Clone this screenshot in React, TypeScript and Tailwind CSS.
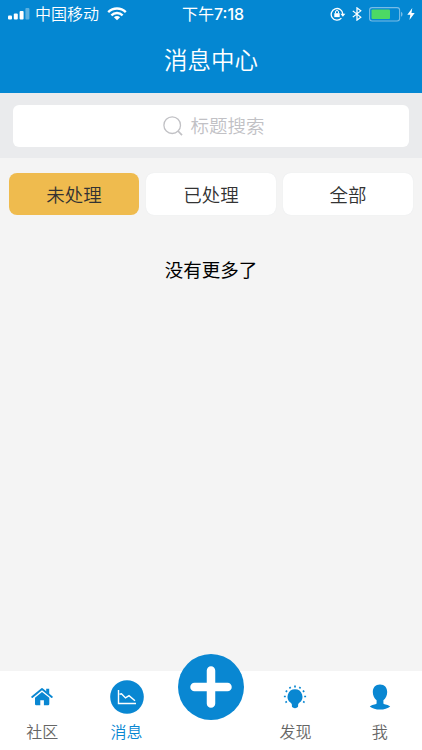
import type { ReactNode } from "react";

function StatusBar() {
  return (
    <div className="grid h-7 grid-cols-[1fr_auto_1fr] items-center pl-2 pr-[6px] text-[16px] leading-7 text-white">
      <div className="flex items-center">
        <svg width="22" height="12" viewBox="0 0 22 12" fill="currentColor">
          <rect x="0" y="7.5" width="4" height="4" rx="1" />
          <rect x="5.8" y="5.5" width="4" height="6" rx="1" />
          <rect x="11.6" y="3" width="4" height="8.5" rx="1" />
          <rect x="17.4" y="0" width="4" height="11.5" rx="1" opacity=".35" />
        </svg>
        <span className="ml-[5px] pt-[2px] leading-[26px] font-[350]">中国移动</span>
        <svg className="ml-2" width="20" height="14" viewBox="0 0 20 14" fill="none" stroke="currentColor" strokeWidth="2.4">
          <path d="M1.2 5.2C6.2.3 13.8.3 18.8 5.2M4.4 8.3c3.1-3 8.1-3 11.2 0" />
          <path d="M10 13.3 6.9 10.2c1.8-1.5 4.4-1.5 6.2 0Z" fill="currentColor" stroke="none" />
        </svg>
      </div>
      <div className="flex items-center pl-[2px]">
        <span className="pt-[2px] leading-[26px]">下午</span>
        <span className="font-['Inter',sans-serif] text-[16px] font-medium">7:18</span>
      </div>
      <div className="flex items-center justify-end">
        <svg width="16" height="14" viewBox="0 0 16 14" fill="none" stroke="currentColor" strokeWidth="1.3">
          <path d="M11.4 11.1A5.8 5.8 0 1 1 12.8 7" />
          <path d="M10.4 6.7h5l-2.5 3Z" fill="currentColor" stroke="none" />
          <rect x="4.3" y="6.2" width="5.4" height="3.9" fill="currentColor" stroke="none" />
          <path d="M5.5 6.4V5a1.5 1.5 0 0 1 3 0v1.4" strokeWidth="1" />
        </svg>
        <svg className="ml-[6px]" width="10" height="14" viewBox="0 0 10 16" preserveAspectRatio="none" fill="none" stroke="currentColor" strokeWidth="1.3">
          <path d="m.8 4.4 8 7.2L5 15V1l3.8 3.4-8 7.2" />
        </svg>
        <svg className="ml-[7px]" width="34" height="15" viewBox="0 0 34 15" fill="none">
          <rect x=".6" y=".6" width="30" height="13.4" rx="2.5" stroke="#78bce6" strokeWidth="1.1" />
          <rect x="2.5" y="2.5" width="18.5" height="9.6" rx="1" fill="#4cd964" />
          <path d="M32 4.8c2 .8 2 4.2 0 5Z" fill="#78bce6" />
        </svg>
        <svg className="ml-1 mr-px" width="8" height="12" viewBox="0 0 8 13" fill="currentColor">
          <path d="M5.4 0 0 7.3h3.3L2.3 13 8 5.4H4.5Z" />
        </svg>
      </div>
    </div>
  );
}

function NavItem({ label, active, children }: { label: string; active?: boolean; children: ReactNode }) {
  return (
    <div className={`flex flex-col items-center ${active ? "text-[#0987d2]" : "text-[#666]"}`}>
      <div className="flex h-[51px] w-full items-center justify-center text-[#0987d2]">{children}</div>
      <span className="pt-px text-[16px] leading-5 font-[350]">{label}</span>
    </div>
  );
}

export default function App() {
  return (
    <div className="flex h-[750px] w-full flex-col overflow-hidden bg-[#f4f4f4] font-['Liberation_Sans','Noto_Sans_CJK_SC',sans-serif]">
      <header className="h-[93px] shrink-0 bg-[#0487d2]">
        <StatusBar />
        <h1 className="text-center font-['Noto_Sans_CJK_SC',sans-serif] text-[23.5px] leading-[62px] font-[350] text-white">消息中心</h1>
      </header>

      <div className="h-[65px] shrink-0 bg-[#eaebed] px-[13px] pt-3">
        <div className="flex h-[42px] items-center justify-center gap-[7px] rounded-md bg-white pl-[6px] text-[#c1c1c5]">
          <svg width="20" height="20" viewBox="0 0 20 20" fill="none" stroke="currentColor" strokeWidth="1.3">
            <circle cx="9.2" cy="9.2" r="8.3" />
            <path d="m15 15 4 4.2" strokeWidth="1.7" />
          </svg>
          <span className="pt-[2px] text-[18.5px] font-[350]">标题搜索</span>
        </div>
      </div>

      <div className="flex h-[57px] shrink-0 gap-[7px] pt-[15px] pr-[9px] pl-[9px] text-[18.5px] font-[350] text-[#333]">
        <button className="h-[42px] flex-1 rounded-lg bg-[#efbb4e] pt-[3px]">未处理</button>
        <button className="h-[42px] flex-1 rounded-lg bg-white pt-[3px] shadow-[0_0_1px_#dfe3e7]">已处理</button>
        <button className="h-[42px] flex-1 rounded-lg bg-white pt-[3px] shadow-[0_0_1px_#dfe3e7]">全部</button>
      </div>

      <main className="flex-1 pt-[42px] text-center text-[18.5px] leading-7 text-black">没有更多了</main>

      <nav className="grid h-[79px] shrink-0 grid-cols-5 bg-white">
        <NavItem label="社区">
          <svg width="22" height="18" viewBox="0 0 22 18" fill="currentColor">
            <path d="M11 3.9 4 9.7V16q0 1.2 1.2 1.2h4.1v-5h3.6v5h4.2q1.2 0 1.2-1.2V9.7Z" />
            <path d="M1.2 9 11 1.1 20.8 9" fill="none" stroke="white" strokeWidth="3.2" />
            <path d="M1.2 9 11 1.1 20.8 9" fill="none" stroke="currentColor" strokeWidth="1.9" strokeLinecap="round" strokeLinejoin="round" />
            <path d="M15.2.8h3v5.4l-3-2.4Z" />
          </svg>
        </NavItem>
        <NavItem label="消息" active>
          <svg width="34" height="34" viewBox="0 0 34 34" fill="none">
            <circle cx="17" cy="17" r="16.8" fill="currentColor" />
            <path d="M8.5 10v13.5H26" stroke="white" strokeWidth="1.4" />
            <path d="m9.5 14.2 2-.5 4 4.2 3.5-2.2 6 5.1" stroke="white" strokeWidth="1.4" />
          </svg>
        </NavItem>
        <div className="-mt-[17px] flex justify-center">
          <button aria-label="+" className="flex h-[66px] w-[66px] items-center justify-center rounded-full bg-[#0987d2]">
            <svg width="42" height="42" viewBox="0 0 42 42" stroke="white" strokeWidth="8.5" strokeLinecap="round">
              <path d="M21 4.5v33M4.5 21h33" />
            </svg>
          </button>
        </div>
        <NavItem label="发现">
          <svg width="24" height="24" viewBox="0 0 24 24" fill="currentColor">
            <path d="M12 4.2a7.5 7.5 0 0 0-4.3 13.6q1.2.8 1.2 2v1.4q0 1 1 1.4 2.1 1.2 4.2 0 1-.4 1-1.4v-1.4q0-1.2 1.2-2A7.5 7.5 0 0 0 12 4.2Z" />
            <path d="M12 .6v1.8M6.6 2l.9 1.5M17.4 2l-.9 1.5M2.7 5.7l1.5 1M21.3 5.7l-1.5 1M.9 11.5h1.9M21.2 11.5h1.9M2.4 17.4l1.5-.8M21.6 17.4l-1.5-.8" stroke="currentColor" strokeWidth="1.7" />
          </svg>
        </NavItem>
        <NavItem label="我">
          <svg width="22" height="26" viewBox="0 0 22 26" fill="currentColor">
            <path d="M11 .5C6.4.5 3.8 3.6 3.8 8c0 3.4 1.5 6.5 3.8 8.2v3.2c-1 1.2-5.2 1-6.8 3.1 4.5 4.1 15.9 4.1 20.4 0-1.6-2.1-5.8-1.9-6.8-3.1v-3.2c2.3-1.7 3.8-4.8 3.8-8.2C18.2 3.6 15.6.5 11 .5Z" />
          </svg>
        </NavItem>
      </nav>
    </div>
  );
}
